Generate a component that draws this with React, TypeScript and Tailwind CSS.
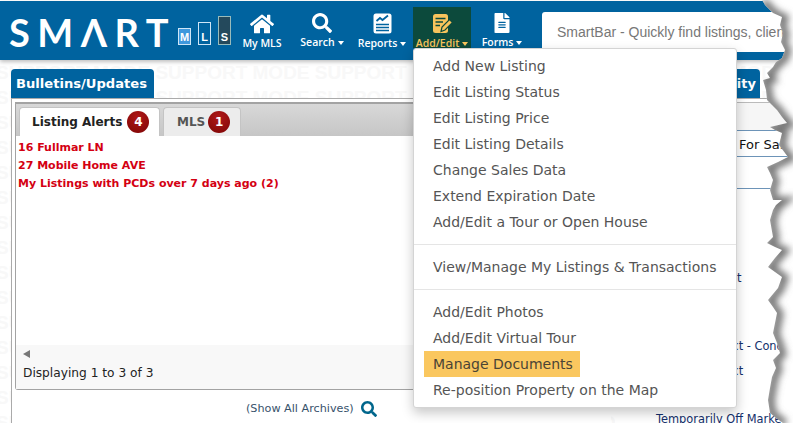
import { FaFileAlt, FaHome, FaSearch } from "react-icons/fa";

const groups = [
  ["Add New Listing", "Edit Listing Status", "Edit Listing Price", "Edit Listing Details", "Change Sales Data", "Extend Expiration Date", "Add/Edit a Tour or Open House"],
  ["View/Manage My Listings & Transactions"],
  ["Add/Edit Photos", "Add/Edit Virtual Tour", "Manage Documents", "Re-position Property on the Map"],
];

const tear =
  "M762 0 L765 5 L768 8 L773 13 L782 17 L780 25 L783 33 L781 42 L785 50 L782 58 L776 62 L773 67 L767 73 L770 78 L763 80 L766 90 L767 100 L772 105 L777 110 L782 117 L787 123 L770 127 L775 130 L782 133 L779 145 L788 157 L778 162 L767 167 L770 173 L773 180 L770 190 L773 200 L782 200 L776 205 L773 210 L770 220 L773 237 L767 243 L775 247 L782 250 L775 258 L768 267 L775 272 L782 277 L778 288 L768 300 L773 307 L777 313 L773 333 L777 343 L780 353 L773 360 L776 368 L772 377 L770 388 L768 400 L770 413 L776 418 L783 423";

const NavItem = ({ icon, label, arrow = true, active = false }: { icon: React.ReactNode; label: string; arrow?: boolean; active?: boolean }) => (
  <div className={`flex h-[41px] flex-col items-center pt-[6px] ${active ? "mx-[1px] w-[58px] bg-[#0c4a3c] text-[#f8c45c]" : "w-[60px] text-white"}`}>
    <div className="flex h-[21px] items-center">{icon}</div>
    <div className="mt-[3px] flex items-center whitespace-nowrap font-['Open_Sans',sans-serif] text-[10.5px] leading-[13px] font-semibold">
      {label}
      {arrow && <span className="mt-[1px] ml-[3px] h-0 w-0 border-x-[3.5px] border-t-[4px] border-x-transparent border-t-current" />}
    </div>
  </div>
);

const ReportsIcon = () => (
  <svg width="19" height="21" viewBox="0 0 19 21">
    <rect x="0.5" y="0.5" width="18" height="20" rx="2.5" fill="#fff" />
    <path d="M3.5 8 L7 5 L9.5 7 L15 2.5" fill="none" stroke="#00639f" strokeWidth="1.8" />
    <path d="M3 11.5 H16 M3 14.5 H16 M3 17.5 H16" stroke="#00639f" strokeWidth="1.6" />
  </svg>
);

const AddEditIcon = () => (
  <svg width="21" height="21" viewBox="0 0 21 21">
    <rect x="1" y="1" width="15" height="19" rx="2.5" fill="#f8c45c" />
    <path d="M3.5 5.5 H13.5 M3.5 9 H11 M3.5 12.5 H8" stroke="#0c4a3c" strokeWidth="1.6" />
    <path d="M9 18.5 L10 14 L17.5 6.5 L20.5 9.5 L13 17 Z" fill="#f8c45c" stroke="#0c4a3c" strokeWidth="1.2" />
  </svg>
);

const Badge = ({ n }: { n: number }) => (
  <span className="flex h-[22px] w-[22px] items-center justify-center rounded-full bg-[radial-gradient(circle_at_50%_30%,#b01818,#7d0505)] font-['DejaVu_Sans',sans-serif] text-[12px] font-bold text-white">
    {n}
  </span>
);

export default function App() {
  return (
    <div className="relative h-[423px] w-[793px] overflow-hidden bg-white font-['DejaVu_Sans',sans-serif]">
      {/* watermark */}
      <div className="absolute top-[60px] left-[-4px] select-none font-['Liberation_Sans',sans-serif] text-[19px] leading-[25px] font-bold whitespace-nowrap text-[#f8f8f8]">
        {Array.from({ length: 15 }).map((_, i) => (
          <div key={i}>{"SUPPORT MODE ".repeat(6)}</div>
        ))}
      </div>

      <div className="relative">
        {/* header */}
        <header className="mt-[1px] flex h-[59px] items-start bg-[#00639f] shadow-[0_2px_4px_rgba(0,0,0,0.25)]">
          <div className="flex h-[59px] w-[243px] shrink-0 items-end pb-[9px] pl-[9px]">
            <span className="w-[169px] shrink-0 font-['Lato',sans-serif] text-[38px] leading-[38px] font-bold tracking-[7.5px] whitespace-nowrap text-white">SMΛRT</span>
            <div className="mb-[6px] flex items-end gap-[7px] font-['Liberation_Sans',sans-serif] text-[11px] leading-[13px] font-bold text-white">
              <div className="flex h-[17px] w-[13px] items-end justify-center border border-[#cfe6f7] bg-[#3f98dd]">M</div>
              <div className="flex h-[23px] w-[13px] items-end justify-center border border-[#cfe6f7]">L</div>
              <div className="flex h-[29px] w-[13px] items-end justify-center border border-[#9bb] bg-[#24495c]">S</div>
            </div>
          </div>
          <nav className="mt-[6px] flex shrink-0 items-start">
            <div className="-ml-[11px] flex">
              <NavItem icon={<FaHome size={24} />} label="My MLS" arrow={false} />
              <NavItem icon={<FaSearch size={20} />} label="Search" />
              <NavItem icon={<ReportsIcon />} label="Reports" />
              <NavItem icon={<AddEditIcon />} label="Add/Edit" active />
              <NavItem icon={<FaFileAlt size={20} />} label="Forms" />
            </div>
          </nav>
          <div className="mt-[11px] ml-[10px] flex h-[40px] flex-1 items-center overflow-hidden rounded-l-[3px] bg-white pl-[15px] font-['Liberation_Sans',sans-serif] text-[14px] whitespace-nowrap text-[#777]">
            SmartBar - Quickly find listings, clients, and more
          </div>
        </header>

        {/* panels */}
        <main className="flex h-[363px] pt-[9px] pl-[11px]">
          <section className="w-[600px] shrink-0">
            <div className="flex h-[29px] w-[143px] items-center rounded-t-[4px] bg-[#00639f] pl-[5px] text-[13.1px] font-bold whitespace-nowrap text-white">
              Bulletins/Updates
            </div>
            <div className="h-[325px] border-t border-l border-[#aaa] bg-white pt-[3px] pl-[3px]">
              <div className="flex h-[288px] flex-col rounded-b-[3px] border border-[#a3a3a3] border-t-[2px]">
                <div className="flex h-[32px] items-end bg-[linear-gradient(#d8d8d8,#c6c6c6)] pl-[3px]">
                  <div className="flex h-[29px] w-[141px] items-center rounded-t-[4px] border border-b-0 border-[#c4c4c4] bg-white pl-[12px] text-[12px] font-bold text-[#222]">
                    Listing Alerts
                    <span className="ml-[5px]"><Badge n={4} /></span>
                  </div>
                  <div className="ml-[3px] flex h-[29px] w-[78px] items-center rounded-t-[4px] border border-b-0 border-[#c4c4c4] bg-[#ececec] pl-[13px] text-[12px] font-bold text-[#555]">
                    MLS
                    <span className="ml-[3px]"><Badge n={1} /></span>
                  </div>
                </div>
                <div className="flex-1 bg-white pt-[3px] pl-[2px] text-[11px] leading-[18px] font-bold text-[#d40012]">
                  <div>16 Fullmar LN</div>
                  <div>27 Mobile Home AVE</div>
                  <div>My Listings with PCDs over 7 days ago (2)</div>
                </div>
                <div className="h-[44px] bg-[#f8f8f8] pt-[5px] pl-[7px]">
                  <div className="h-0 w-0 border-y-[4.5px] border-r-[7px] border-y-transparent border-r-[#777]" />
                  <div className="mt-[7px] text-[12.2px] leading-[16px] text-[#222]">Displaying 1 to 3 of 3</div>
                </div>
              </div>
              <div className="mt-[11px] flex items-center pl-[231px] text-[11.2px] leading-[16px] text-[#37526b]">
                (Show All Archives)
                <FaSearch size={16} className="ml-[7px] text-[#00668c]" />
              </div>
            </div>
          </section>

          <section className="ml-[4px] flex-1">
            <div className="flex h-[29px] w-[145px] items-center justify-end rounded-t-[4px] bg-[#00639f] pr-[4px] text-[13px] font-bold text-white">
              Market Activity
            </div>
            <div className="h-[325px] border-t border-[#aaa] bg-white pt-[3px] text-[11.4px]">
              <div className="h-[29px] border-t border-b border-t-[#bbb] border-b-[#6d94b8] bg-[#f6f6f6]" />
              <div className="h-[26px] border-b border-[#6d94b8] pl-[124px] text-[13px] leading-[28px] whitespace-nowrap text-[#111]">For Sale</div>
              <div className="h-[32px] border-b border-[#6d94b8]" />
              <div className="pt-[77px] pl-[41px] leading-[25px] whitespace-nowrap text-[#14306b]">
                <div>New on Market</div>
                <div className="h-[43px]" />
                <div>Under Contract - Conditional</div>
                <div>Under Contract</div>
                <div className="h-[23px]" />
                <div>Temporarily Off Market</div>
              </div>
            </div>
          </section>
        </main>
      </div>

      {/* add/edit dropdown */}
      <div className="absolute top-[48px] left-[413px] h-[360px] w-[324px] rounded-[3px] border border-[#d4d4d4] bg-white pt-[4px] text-[14px] leading-[26px] text-[#555] shadow-[0_5px_12px_rgba(0,0,0,0.22)]">
        {groups.map((items, g) => (
          <div key={g} className={g > 0 ? "mt-[9px] border-t border-[#e5e5e5] pt-[9px]" : ""}>
            {items.map((item) => (
              <div key={item} className="pl-[10px]">
                <span className={`inline-block pr-[7px] pl-[9px] ${item === "Manage Documents" ? "bg-[#fac75f] text-[#4a4436]" : ""}`}>{item}</span>
              </div>
            ))}
          </div>
        ))}
      </div>

      {/* torn paper edge */}
      <svg className="absolute top-0 left-[730px]" width="63" height="423" viewBox="730 0 63 423">
        <defs>
          <filter id="tear-blur" x="-50%" y="-5%" width="200%" height="110%">
            <feGaussianBlur stdDeviation="3.5" />
          </filter>
          <clipPath id="tear-clip">
            <path d={`${tear} L793 423 L793 0 Z`} />
          </clipPath>
        </defs>
        <g clipPath="url(#tear-clip)">
          <rect x="730" y="0" width="63" height="423" fill="#fff" />
          <path d={tear} transform="translate(2 1)" fill="none" stroke="#777" strokeWidth="9" filter="url(#tear-blur)" />
        </g>
      </svg>
    </div>
  );
}
